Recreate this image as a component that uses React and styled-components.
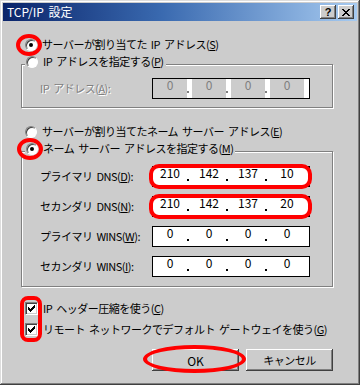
import React from 'react';
import styled, { createGlobalStyle } from 'styled-components';

const uiFont = '"Noto Sans CJK JP", "Liberation Sans", sans-serif';

const GlobalStyle = createGlobalStyle`
  html, body {
    margin: 0;
    padding: 0;
    background: #cccccc;
  }
  body {
    font-family: ${uiFont};
  }
`;

const Window = styled.div`
  box-sizing: border-box;
  width: 360px;
  height: 385px;
  padding: 3px;
  background: #cccccc;
  box-shadow: inset -1px -1px #404040, inset 1px 1px #dddddd,
    inset -2px -2px #808080, inset 2px 2px #ffffff;
  display: flex;
  flex-direction: column;
  color: #000;
  font-family: ${uiFont};
`;

const TitleBar = styled.div`
  height: 18px;
  flex: none;
  display: flex;
  align-items: center;
  padding: 0 3px 0 4px;
  background: linear-gradient(90deg, #0a246a 0%, #3a6ab0 45%, #a6caf0 100%);
`;

const Title = styled.span`
  flex: 1;
  color: #ffffff;
  font-size: 12px;
  line-height: 14px;
  word-spacing: 2px;
`;

const TitleButton = styled.button`
  width: 16px;
  height: 14px;
  margin-left: 2px;
  padding: 0;
  border: none;
  background: #cccccc;
  box-shadow: inset -1px -1px #404040, inset 1px 1px #ffffff,
    inset -2px -2px #808080;
  display: flex;
  align-items: center;
  justify-content: center;
  font: bold 11px "Liberation Sans", sans-serif;
  color: #000;
`;

const Body = styled.div`
  flex: 1;
  display: flex;
  flex-direction: column;
  padding: 15px 24px 0 18px;
`;

const OptionRow = styled.label`
  display: flex;
  align-items: center;
  gap: 5px;
  height: 17px;
  margin-left: ${p => p.$indent || 4}px;
  margin-top: ${p => p.$top || 0}px;
  font-size: 11px;
  line-height: 13px;
  letter-spacing: -0.5px;
  word-spacing: 2px;
  white-space: nowrap;
`;

const Radio = styled.span`
  position: relative;
  flex: none;
  box-sizing: border-box;
  width: 12px;
  height: 12px;
  border-radius: 50%;
  background: #ffffff;
  border: 1px solid;
  border-color: #808080 #ffffff #ffffff #808080;
  box-shadow: inset 1px 1px #404040;
  display: flex;
  align-items: center;
  justify-content: center;

  &::before {
    content: '';
    display: ${p => (p.$checked ? 'block' : 'none')};
    width: 4px;
    height: 4px;
    border-radius: 50%;
    background: #000;
  }

  &::after {
    content: '';
    display: ${p => (p.$marked ? 'block' : 'none')};
    position: absolute;
    top: -6px;
    left: -10px;
    width: 26px;
    height: 22px;
    box-sizing: border-box;
    border: 4px solid #ff0000;
    border-radius: 50%;
  }
`;

const Group = styled.fieldset`
  margin: 0;
  padding: 0;
  min-width: 0;
  border: 1px solid #808080;
  box-shadow: inset 1px 1px #ffffff, 1px 1px #ffffff;
`;

const Legend = styled.legend`
  margin-left: 3px;
  padding: 0 2px 6px 0;
  background: #cccccc;
`;

const GroupBody = styled.div`
  display: flex;
  flex-direction: column;
  gap: 9px;
  padding: ${p => p.$top}px 22px ${p => p.$bottom}px 18px;
`;

const FieldRow = styled.div`
  display: flex;
  align-items: center;
  justify-content: space-between;
  height: 21px;
`;

const FieldLabel = styled.span`
  font-size: 11px;
  line-height: 13px;
  letter-spacing: -0.5px;
  word-spacing: 2px;
  white-space: nowrap;
  color: ${p => (p.$disabled ? '#808080' : '#000')};
  text-shadow: ${p => (p.$disabled ? '1px 1px #ffffff' : 'none')};
`;

const IpBox = styled.div`
  position: relative;
  box-sizing: border-box;
  width: 158px;
  height: 21px;
  border: 1px solid #000;
  background: #ffffff;
  display: flex;

  &::after {
    content: '';
    display: ${p => (p.$marked ? 'block' : 'none')};
    position: absolute;
    top: -3px;
    bottom: -3px;
    left: -4px;
    right: -3px;
    border: 4px solid #ff0000;
    border-radius: 10px;
  }
`;

const Octet = styled.span`
  width: 34px;
  flex: none;
  text-align: center;
  font-size: 12px;
  line-height: 12px;
  background: ${p => (p.$disabled ? '#cccccc' : '#ffffff')};
  color: ${p => (p.$disabled ? '#808080' : '#000')};
`;

const Dot = styled.span`
  width: 5px;
  flex: none;
  display: flex;
  align-items: flex-end;
  padding-bottom: 5px;
  box-sizing: border-box;

  &::before {
    content: '';
    width: 2px;
    height: 2px;
    background: ${p => (p.$disabled ? '#808080' : '#000')};
  }
`;

const CheckList = styled.div`
  position: relative;
  margin-top: 11px;
  display: flex;
  flex-direction: column;
`;

const CheckRow = styled.label`
  display: flex;
  align-items: center;
  gap: 5px;
  height: 21px;
  margin-left: 4px;
  font-size: 11px;
  line-height: 13px;
  letter-spacing: -0.5px;
  word-spacing: 2px;
  white-space: nowrap;
`;

const CheckBox = styled.span`
  flex: none;
  box-sizing: border-box;
  width: 13px;
  height: 13px;
  background: #ffffff;
  border: 1px solid;
  border-color: #808080 #ffffff #ffffff #808080;
  box-shadow: inset 1px 1px #404040, inset -1px -1px #cccccc;
  display: flex;
  align-items: center;
  justify-content: center;
`;

const CheckMarker = styled.span`
  position: absolute;
  left: -1px;
  top: -2px;
  width: 22px;
  height: 46px;
  box-sizing: border-box;
  border: 4px solid #ff0000;
  border-radius: 8px;
`;

const ButtonRow = styled.div`
  display: flex;
  justify-content: flex-end;
  gap: 7px;
  margin-top: 9px;
`;

const PushButton = styled.button`
  position: relative;
  width: 87px;
  height: 22px;
  padding: 0;
  border: none;
  background: #cccccc;
  box-shadow: inset -1px -1px #404040, inset 1px 1px #ffffff,
    inset -2px -2px #808080;
  font-family: ${uiFont};
  font-size: ${p => (p.$jp ? 11 : 12)}px;
  letter-spacing: ${p => (p.$jp ? '-0.5px' : '0')};
  color: #000;
  overflow: visible;

  &::after {
    content: '';
    display: ${p => (p.$marked ? 'block' : 'none')};
    position: absolute;
    top: -4px;
    bottom: -2px;
    left: -9px;
    right: -7px;
    border: 4px solid #ff0000;
    border-radius: 50%;
  }
`;

const Tick = () => (
  <svg width="7" height="7" viewBox="0 0 7 7" shapeRendering="crispEdges">
    <path d="M0 2h1v1h1v1h1v-1h1v-1h1v-1h1v-1h1v3h-1v1h-1v1h-1v1h-1v1h-1v-1h-1v-1h-1z" fill="#000" />
  </svg>
);

const CloseGlyph = () => (
  <svg width="8" height="7" viewBox="0 0 8 7" shapeRendering="crispEdges">
    <path d="M0 0h2v1h1v1h2v-1h1v-1h2v1h-1v1h-1v1h-1v1h1v1h1v1h1v1h-2v-1h-1v-1h-2v1h-1v1h-2v-1h1v-1h1v-1h1v-1h-1v-1h-1v-1h-1z" fill="#000" />
  </svg>
);

const IpField = ({ values, disabled, marked }) => (
  <IpBox $marked={marked}>
    {values.map((v, i) => (
      <React.Fragment key={i}>
        {i > 0 && <Dot $disabled={disabled} />}
        <Octet $disabled={disabled}>{v}</Octet>
      </React.Fragment>
    ))}
  </IpBox>
);

const dnsRows = [
  { label: 'プライマリ DNS', key: 'D', values: ['210', '142', '137', '10'], marked: true },
  { label: 'セカンダリ DNS', key: 'N', values: ['210', '142', '137', '20'], marked: true },
  { label: 'プライマリ WINS', key: 'W', values: ['0', '0', '0', '0'] },
  { label: 'セカンダリ WINS', key: 'I', values: ['0', '0', '0', '0'] },
];

export default function App() {
  return (
    <>
      <GlobalStyle />
      <Window>
        <TitleBar>
          <Title>TCP/IP 設定</Title>
          <TitleButton>?</TitleButton>
          <TitleButton><CloseGlyph /></TitleButton>
        </TitleBar>

        <Body>
          <OptionRow>
            <Radio $checked $marked />
            <span>サーバーが割り当てた IP アドレス(<u>S</u>)</span>
          </OptionRow>

          <Group>
            <Legend>
              <OptionRow $indent={1}>
                <Radio />
                <span>IP アドレスを指定する(<u>P</u>)</span>
              </OptionRow>
            </Legend>
            <GroupBody $top={2} $bottom={8}>
              <FieldRow>
                <FieldLabel $disabled>IP アドレス(<u>A</u>):</FieldLabel>
                <IpField values={['0', '0', '0', '0']} disabled />
              </FieldRow>
            </GroupBody>
          </Group>

          <OptionRow $top={15}>
            <Radio />
            <span>サーバーが割り当てたネーム サーバー アドレス(<u>E</u>)</span>
          </OptionRow>

          <Group>
            <Legend>
              <OptionRow $indent={1}>
                <Radio $checked $marked />
                <span>ネーム サーバー アドレスを指定する(<u>M</u>)</span>
              </OptionRow>
            </Legend>
            <GroupBody $top={3} $bottom={9}>
              {dnsRows.map(row => (
                <FieldRow key={row.label}>
                  <FieldLabel>
                    {row.label}(<u>{row.key}</u>):
                  </FieldLabel>
                  <IpField values={row.values} marked={row.marked} />
                </FieldRow>
              ))}
            </GroupBody>
          </Group>

          <CheckList>
            <CheckRow>
              <CheckBox><Tick /></CheckBox>
              <span>IP ヘッダー圧縮を使う(<u>C</u>)</span>
            </CheckRow>
            <CheckRow>
              <CheckBox><Tick /></CheckBox>
              <span>リモート ネットワークでデフォルト ゲートウェイを使う(<u>G</u>)</span>
            </CheckRow>
            <CheckMarker />
          </CheckList>

          <ButtonRow>
            <PushButton $marked>OK</PushButton>
            <PushButton $jp>キャンセル</PushButton>
          </ButtonRow>
        </Body>
      </Window>
    </>
  );
}
